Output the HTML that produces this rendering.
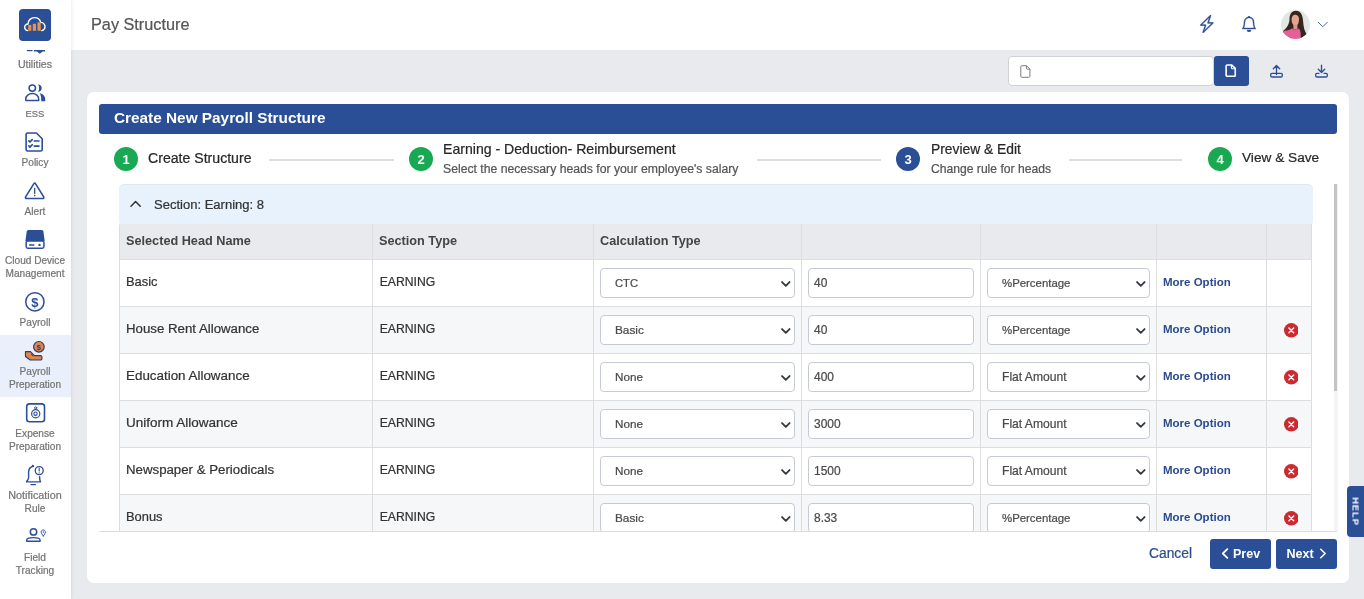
<!DOCTYPE html>
<html lang="en">
<head>
<meta charset="utf-8">
<title>Pay Structure</title>
<style>
*{box-sizing:border-box;margin:0;padding:0}
html,body{width:1364px;height:599px;overflow:hidden}
body{background:#e9eaee;font-family:"Liberation Sans",sans-serif;color:#333;position:relative;-webkit-text-stroke:.22px}
.abs{position:absolute}
#hdr,th,.mo,.btn,.stepc,#help,#side text{-webkit-text-stroke:0}
#wrap{position:absolute;left:0;top:0;width:1364px;height:599px;overflow:hidden;will-change:transform;opacity:.999}
svg{display:block}
/* sidebar */
#side{position:absolute;left:0;top:0;width:71px;height:599px;background:#fff;box-shadow:1px 0 3px rgba(0,0,0,.08);z-index:5}
#logo{position:absolute;left:19px;top:9px;width:32px;height:32px;border-radius:4px;background:#2b4f96}
.nl{position:absolute;left:0;width:70px;text-align:center;font-size:10.1px;line-height:13px;color:#747474;white-space:nowrap}
.ni{position:absolute}
#act{position:absolute;left:0;top:335px;width:71px;height:62px;background:#e9effb}
/* topbar */
#top{position:absolute;left:71px;top:0;width:1293px;height:50px;background:#fff}
#title{position:absolute;left:91px;top:13px;font-size:16.25px;line-height:22px;color:#555;z-index:2}
/* toolbar */
#fin{position:absolute;left:1008px;top:56px;width:206px;height:30px;background:#fff;border:1px solid #cfd1d5;border-radius:4px}
#fbtn{position:absolute;left:1214px;top:56px;width:35px;height:30px;background:#2b4f96;border-radius:3px}
/* card */
#card{position:absolute;left:87px;top:92px;width:1262px;height:491px;background:#fff;border-radius:7px}
#hdr{position:absolute;left:99px;top:104px;width:1238px;height:30px;background:#2b4f96;border-radius:3px;color:#fff;font-weight:bold;font-size:15.35px;line-height:28px;padding-left:15px}
.stepc{position:absolute;top:147px;width:24px;height:24px;border-radius:50%;color:#fff;font-size:13px;font-weight:bold;text-align:center;line-height:26.5px}
.g{background:#1aa953}.b{background:#2b4f96}
.st{position:absolute;line-height:18px;color:#282828;white-space:nowrap}
.ss{position:absolute;line-height:14px;color:#555;white-space:nowrap}
.ln{position:absolute;height:2px;background:#dedede;top:159px}
#sec{position:absolute;left:119px;top:184px;width:1194px;height:40px;background:#e7f2fd;border-top:1px solid #e3e8ee;border-radius:5px 5px 2px 2px;font-size:13.03px;line-height:39px;color:#333}
#tblwrap{position:absolute;left:119px;top:224px;width:1193px;height:307px;overflow:hidden}
table{border-collapse:collapse;table-layout:fixed;width:1192px}
th,td{border:1px solid #dcdddf;text-align:left;vertical-align:top;position:relative;white-space:nowrap}
th{background:#e9eaed;height:35px;font-size:12.7px;font-weight:bold;color:#444;padding:9px 0 0 6px;border-top-color:#e9eaed}
td{height:47px;padding:14px 0 0 6px;color:#333;line-height:16px}
tr.e td{background:#f6f7f9}
.sel{position:absolute;left:6px;top:8px;height:30px;border:1px solid #c6cad5;border-radius:4px;background:#fff;line-height:28px;padding-left:14px;color:#4a4a4a}
.s1{width:195px}.s2{width:163px}
.cv{position:absolute;right:3.5px;top:11.5px}
.inp{position:absolute;left:6px;top:8px;width:166px;height:30px;border:1px solid #c6cad5;border-radius:4px;background:#fff;font-size:11.95px;line-height:28px;padding-left:5px;color:#4a4a4a}
.mo{color:#2b4b8e;font-weight:bold;font-size:11.5px;position:relative;top:-1.5px}
.del{position:absolute;left:16.7px;top:16.2px;width:14.6px;height:14.6px}
#botline{position:absolute;left:99px;top:531px;width:1238px;height:1px;background:#dcdcdc}
#track{position:absolute;left:1334px;top:184px;width:4px;height:347px;background:#f4f4f4}
#thumb{position:absolute;left:1334px;top:184px;width:3px;height:207px;background:#c4c4c4}
.btn{position:absolute;top:539px;height:30px;width:61px;background:#2b4f96;border-radius:3px;color:#fff;font-weight:bold;line-height:31px;white-space:nowrap}
#help{position:absolute;left:1347px;top:486px;width:18px;height:51px;background:#2b4f96;border-radius:4px 0 0 4px}
#help span{position:absolute;left:-17.5px;top:18px;width:51px;height:14px;line-height:14px;text-align:center;transform:rotate(90deg);color:#fff;font-weight:bold;font-size:9.4px;letter-spacing:.9px;padding-left:1px}
</style>
</head>
<body>
<div id="wrap">
<div id="top"></div>
<div id="title">Pay Structure</div>
<svg class="abs" style="left:1197px;top:15px" width="19.6" height="18" viewBox="0 0 16 16" preserveAspectRatio="none" fill="#2b4f96" stroke="#2b4f96" stroke-width=".25"><path d="M11.251.068a.5.5 0 0 1 .227.58L9.677 6.5H13a.5.5 0 0 1 .364.843l-8 8.500a.5.5 0 0 1-.842-.49L6.323 9.500H3a.5.5 0 0 1-.364-.843l8-8.500a.5.5 0 0 1 .615-.09zM4.157 8.500H7a.5.5 0 0 1 .478.647L6.110 13.590l5.732-6.090H9a.5.5 0 0 1-.478-.647L9.890 2.410 4.157 8.500z"/></svg>
<svg class="abs" style="left:1241px;top:16px" width="16" height="16" viewBox="0 0 16 16" fill="#2b4f96" stroke="#2b4f96" stroke-width=".4"><path d="M8 16a2 2 0 0 0 2-2H6a2 2 0 0 0 2 2zM8 1.918l-.797.161A4.002 4.002 0 0 0 4 6c0 .628-.134 2.197-.459 3.742-.16.767-.376 1.566-.663 2.258h10.244c-.287-.692-.502-1.490-.663-2.258C12.134 8.197 12 6.628 12 6a4.002 4.002 0 0 0-3.203-3.920L8 1.917zM14.220 12c.223.447.481.801.780 1H1c.299-.199.557-.553.780-1C2.680 10.200 3 6.880 3 6c0-2.420 1.720-4.440 4.005-4.901a1 1 0 1 1 1.990 0A5.002 5.002 0 0 1 13 6c0 .880.320 4.200 1.220 6z"/></svg>
<svg class="abs" style="left:1281px;top:10px" width="29" height="29" viewBox="0 0 29 29">
<defs><clipPath id="av"><circle cx="14.5" cy="14.5" r="14.5"/></clipPath><filter id="bl" x="-10%" y="-10%" width="120%" height="120%"><feGaussianBlur stdDeviation=".55"/></filter></defs>
<g clip-path="url(#av)"><g filter="url(#bl)">
<rect x="-3" y="-3" width="35" height="35" fill="#e4e6e6"/>
<path d="M15 0.800 C10.500 0.600 8.600 4.500 8.500 9 C8.400 13.500 6.600 17.400 1.500 21.600 L1 26 L10 22 L18 22 L19.500 28 L26 24.500 C23.400 21.500 22.600 17 22.200 12 C21.800 6 20.400 1 15 0.800 Z" fill="#38251f"/>
<path d="M10.600 9.500 C10.600 6.500 12 4.800 14.200 4.800 C16.800 4.800 18.200 7 18 10.200 C17.800 13.400 16.400 15.800 14.400 15.800 C12.200 15.800 10.600 13 10.600 9.500 Z" fill="#e2a48e"/>
<path d="M12.400 14.500 H16.400 V19.500 H12.400 Z" fill="#d99a86"/>
<path d="M2 21.600 C5 19.800 8 19.600 11.400 18.400 C13.200 20 15.800 20 17.600 18.600 C18.800 19.600 19.600 21 19.800 23 L19.600 30 H4 Z" fill="#e55f98"/>
<path d="M10.700 12.500 C9.800 15.600 8.200 18.400 4.500 21 L9.200 19.400 C10.600 17.400 11.200 15 10.700 12.500 Z" fill="#38251f"/>
<path d="M17.900 10.500 C18 15 18.600 19 19.800 22.400 L20 28 L25 25 C22.600 21 21.600 15 20.800 9 Z" fill="#38251f"/>
</g></g></svg>
<svg class="abs" style="left:1317px;top:21px" width="12" height="8" viewBox="0 0 12 8"><path d="M1.2 1.2 L5.8 5.8 L10.4 1.2" fill="none" stroke="#4a66ab" stroke-width="1" stroke-linecap="round" stroke-linejoin="round"/></svg>

<div id="fin"></div>
<div id="fbtn"></div>
<svg class="abs" style="left:1020px;top:65px" width="11" height="13" viewBox="0 0 11 13"><path d="M1.9 .7 H6.6 L9.9 4 V11.2 C9.9 11.8 9.4 12.3 8.800 12.3 H1.9 C1.3 12.3 .8 11.8 .8 11.2 V1.8 C.8 1.2 1.3 .7 1.9 .7 Z M6.4 .9 V3.200 C6.4 3.800 6.800 4.200 7.400 4.200 H9.7" fill="none" stroke="#6e6e6e" stroke-width=".9"/></svg>
<svg class="abs" style="left:1225.3px;top:63.6px" width="11.4" height="13.3" viewBox="0 0 12 14"><path d="M2.4 1 H7.200 L10.800 4.600 V11.800 C10.800 12.500 10.300 13 9.600 13 H2.400 C1.700 13 1.200 12.500 1.200 11.800 V2.200 C1.200 1.500 1.700 1 2.400 1 Z" fill="none" stroke="#fff" stroke-width="1.7" stroke-linejoin="round"/><path d="M6.8 1 V3.800 C6.800 4.500 7.300 5 8 5 H10.800" fill="none" stroke="#fff" stroke-width="1.3"/></svg>
<svg class="abs" style="left:1269px;top:64px" width="15" height="15" viewBox="0 0 15 15" fill="none" stroke="#2b4f96" stroke-width="1.35" stroke-linecap="round" stroke-linejoin="round"><rect x="1.700" y="9.300" width="11.600" height="3.700" rx="1.300"/><path d="M7.500 10.400 V1.600 M4.300 4.700 L7.500 1.500 L10.700 4.700"/></svg>
<svg class="abs" style="left:1314px;top:64px" width="15" height="15" viewBox="0 0 15 15" fill="none" stroke="#2b4f96" stroke-width="1.35" stroke-linecap="round" stroke-linejoin="round"><path d="M5 9.300 H3 C2.300 9.300 1.700 9.900 1.700 10.600 V11.700 C1.700 12.400 2.300 13 3 13 H12 C12.700 13 13.300 12.400 13.300 11.700 V10.600 C13.300 9.900 12.700 9.300 12 9.300 H10"/><path d="M7.500 1.200 V8.300 M4.300 5.300 L7.500 8.500 L10.700 5.300"/></svg>

<div id="side">
  <div id="logo"></div>
  <div id="act"></div>
<svg class="abs" style="left:0;top:0" width="71" height="599" viewBox="0 0 71 599" fill="none" stroke="#2b4f96" stroke-width="1.5" stroke-linecap="round" stroke-linejoin="round">
<!-- logo cloud -->
<path d="M27.6 30.6 C24.6 30.2 23.6 26.6 25.8 24.8 C26.4 24.2 27.2 24 28 24 C28.2 20.2 31 17.6 34.4 17.6 C37.6 17.6 40 19.6 40.8 22.4 C43.4 22.6 45.2 24.6 45 27 C44.9 28.8 43.6 30.2 41.8 30.6" stroke="#fff" stroke-width="1.4"/>
<g stroke="none" fill="#e9924c"><rect x="28.2" y="25" width="3.1" height="5.8"/><rect x="32.8" y="23.8" width="3.2" height="7"/><rect x="37.5" y="22.3" width="3.2" height="8.5"/></g>
<!-- utilities (clipped bottom) -->
<g stroke="none" fill="#2b4f96"><rect x="26.9" y="50" width="5.6" height="1.2"/><path d="M33.8 50 H45 V51.4 H42.6 L39.8 53.8 L37 51.4 H33.8 Z"/></g>
<!-- ESS -->
<circle cx="32.3" cy="88.1" r="3.2"/>
<path d="M25.8 100.5 V99 C25.8 96 28.7 93.6 32.3 93.6 C35.9 93.6 38.7 96 38.7 99 V100.5 Z"/>
<g stroke="none" fill="#2b4f96"><path d="M38 84.2 C40.4 84.4 41.7 86.1 41.7 88.1 C41.7 90.1 40.4 91.8 38 92 C39.5 89.700 39.5 86.500 38 84.2 Z"/><path d="M39.6 93.2 C43 93.8 45.2 96.2 45.2 99 V101.3 H41.2 V99 C41.2 96.8 40.8 94.8 39.6 93.2 Z"/></g>
<!-- Policy -->
<path d="M27.6 133 H36.4 L42.2 138.8 V149.4 C42.2 150.3 41.5 151 40.6 151 H27.6 C26.7 151 26.1 150.3 26.1 149.4 V134.6 C26.1 133.7 26.7 133 27.6 133 Z" stroke-width="1.6"/>
<path d="M28.8 140.8 L30 142 L32.2 139.6 M34.2 141 H39 M28.8 145.900 L30 147.100 L32.2 144.700 M34.2 146.100 H39" stroke-width="1.65"/>
<!-- Alert -->
<path d="M33.9 183.6 C34.3 182.9 35.100 182.9 35.5 183.6 L43.7 196.900 C44.100 197.700 43.6 198.5 42.8 198.5 H26.5 C25.7 198.5 25.200 197.700 25.6 196.900 Z" stroke-width="1.6"/>
<path d="M34.7 188.4 V193.4" stroke-width="1.3"/><circle cx="34.7" cy="195.6" r=".8" fill="#2b4f96" stroke="none"/>
<!-- Cloud device -->
<path d="M28.6 230.1 H41.5 C42.5 230.1 43.2 230.7 43.4 231.6 L44.7 241 H25.4 L26.7 231.6 C26.9 230.7 27.6 230.1 28.6 230.1 Z" fill="#2b4f96" stroke="none"/>
<rect x="26.15" y="241" width="17.8" height="7.2" rx="1.6" stroke-width="1.5"/>
<path d="M29.6 245 H33.8" stroke-width="1.5"/><circle cx="39.5" cy="244.9" r="1.2" fill="#2b4f96" stroke="none"/>
<!-- Payroll -->
<circle cx="34.9" cy="301.8" r="9.15" stroke-width="1.5"/>
<text x="34.9" y="306.6" text-anchor="middle" font-family="Liberation Sans, sans-serif" font-size="13" font-weight="bold" fill="#2b4f96" stroke="none">$</text>
<!-- Payroll prep -->
<g stroke="#2c3e73" stroke-width="1.2" fill="#e08545">
<circle cx="38.9" cy="346.8" r="5.3"/>
<path d="M25.5 351.6 H30.4 L34.4 355.6 H40.8 C42.4 355.6 42.4 360 40.8 360 H30.2 L25.5 356.4 Z"/>
</g>
<path d="M31.4 354.6 L32.8 355.6" stroke="#2c3e73" stroke-width="1"/>
<text x="38.9" y="349.6" text-anchor="middle" font-family="Liberation Sans, sans-serif" font-size="7.6" font-weight="bold" fill="#2c3e73" stroke="none">$</text>
<!-- Expense -->
<rect x="26.7" y="403.9" width="17.8" height="17.8" rx="2.8" stroke-width="1.6"/>
<circle cx="35.7" cy="413.7" r="4.1" stroke-width="1.2"/><circle cx="35.5" cy="413.7" r="1.7" stroke-width="1.1"/><circle cx="35.7" cy="407.9" r="1.1" stroke-width="1"/>
<!-- Notification -->
<path d="M33.6 466.2 C30.4 466.6 28.6 469.2 28.6 472.4 V477.6 C28.6 479.6 27.6 480.6 26.6 481.4 V481.9 H40.4 V481.4 C39.8 480.8 39.6 479.4 39.6 476.6" stroke-width="1.4"/>
<path d="M31 484.7 H35.4 M32.4 465.4 L33.4 465.8" stroke-width="1.3"/>
<circle cx="39.2" cy="470.6" r="4" stroke-width="1.3"/><path d="M39.2 468.4 V471" stroke-width="1.1"/><circle cx="39.2" cy="472.8" r=".6" fill="#2b4f96" stroke="none"/>
<!-- Field -->
<circle cx="33.5" cy="531.9" r="3.2" stroke-width="1.5"/>
<path d="M26.7 541.2 V540.2 C26.7 538.6 29.4 537.6 33.4 537.6 C37.4 537.6 40.1 538.6 40.1 540.2 V541.2 Z" stroke-width="1.4"/>
<path d="M43.3 536 C42 534.4 41.2 533.2 41.2 532 C41.2 530.8 42.1 529.9 43.3 529.9 C44.5 529.9 45.4 530.8 45.4 532 C45.4 533.2 44.6 534.4 43.3 536 Z" stroke-width=".9"/><circle cx="43.3" cy="532" r=".7" fill="#2b4f96" stroke="none"/>
</svg>

  <div class="nl" style="top:58px;font-size:10.6px">Utilities</div>
  <div class="nl" style="top:107px;font-size:9.4px">ESS</div>
  <div class="nl" style="top:156px">Policy</div>
  <div class="nl" style="top:205px">Alert</div>
  <div class="nl" style="top:254px">Cloud Device<br>Management</div>
  <div class="nl" style="top:316px">Payroll</div>
  <div class="nl" style="top:365px">Payroll<br>Preperation</div>
  <div class="nl" style="top:427px">Expense<br>Preparation</div>
  <div class="nl" style="top:489px"><span style="font-size:10.8px">Notification</span><br>Rule</div>
  <div class="nl" style="top:551px">Field<br>Tracking</div>
</div>
<div id="card"></div>
<div id="hdr">Create New Payroll Structure</div>

<div class="stepc g" style="left:114px">1</div>
<div class="st" style="left:148px;top:149px;font-size:14.12px">Create Structure</div>
<div class="ln" style="left:269px;width:125px"></div>
<div class="stepc g" style="left:409px">2</div>
<div class="st" style="left:443px;top:140px;font-size:14.1px">Earning - Deduction- Reimbursement</div>
<div class="ss" style="left:443px;top:162px;font-size:12.21px">Select the necessary heads for your employee's salary</div>
<div class="ln" style="left:757px;width:124px"></div>
<div class="stepc b" style="left:896px">3</div>
<div class="st" style="left:931px;top:140px;font-size:13.84px">Preview &amp; Edit</div>
<div class="ss" style="left:931px;top:162px;font-size:12.14px">Change rule for heads</div>
<div class="ln" style="left:1069px;width:113px"></div>
<div class="stepc g" style="left:1208px">4</div>
<div class="st" style="left:1242px;top:149px;font-size:13.66px">View &amp; Save</div>

<div id="sec"><svg class="abs" style="left:11px;top:15.200px" width="11.200" height="7.400" viewBox="0 0 12 8"><path d="M1 6.8 L6 1.6 L11 6.8" fill="none" stroke="#333" stroke-width="1.6" stroke-linecap="round" stroke-linejoin="round"/></svg><span style="position:absolute;left:35px">Section: Earning: 8</span></div>
<div id="tblwrap">
<table>
<colgroup><col style="width:253px"><col style="width:221px"><col style="width:208px"><col style="width:179px"><col style="width:176px"><col style="width:110px"><col style="width:45px"></colgroup>
<tr><th>Selected Head Name</th><th>Section Type</th><th>Calculation Type</th><th></th><th></th><th></th><th></th></tr>
<tr><td style="font-size:12.9px">Basic</td><td style="font-size:12.2px;padding-left:6.7px">EARNING</td><td><div class="sel s1" style="font-size:11.2px">CTC<svg class="cv" width="9.6" height="6.1" viewBox="0 0 11 7"><path d="M1.2 1.2 L5.5 5.5 L9.8 1.2" fill="none" stroke="#343a40" stroke-width="2.15" stroke-linecap="round" stroke-linejoin="round"/></svg></div></td><td><div class="inp">40</div></td><td><div class="sel s2" style="font-size:11.4px">%Percentage<svg class="cv" width="9.6" height="6.1" viewBox="0 0 11 7"><path d="M1.2 1.2 L5.5 5.5 L9.8 1.2" fill="none" stroke="#343a40" stroke-width="2.15" stroke-linecap="round" stroke-linejoin="round"/></svg></div></td><td><span class="mo">More Option</span></td><td></td></tr>
<tr class="e"><td style="font-size:13.25px">House Rent Allowance</td><td style="font-size:12.2px;padding-left:6.7px">EARNING</td><td><div class="sel s1" style="font-size:11.8px">Basic<svg class="cv" width="9.6" height="6.1" viewBox="0 0 11 7"><path d="M1.2 1.2 L5.5 5.5 L9.8 1.2" fill="none" stroke="#343a40" stroke-width="2.15" stroke-linecap="round" stroke-linejoin="round"/></svg></div></td><td><div class="inp">40</div></td><td><div class="sel s2" style="font-size:11.4px">%Percentage<svg class="cv" width="9.6" height="6.1" viewBox="0 0 11 7"><path d="M1.2 1.2 L5.5 5.5 L9.8 1.2" fill="none" stroke="#343a40" stroke-width="2.15" stroke-linecap="round" stroke-linejoin="round"/></svg></div></td><td><span class="mo">More Option</span></td><td><svg class="del" viewBox="0 0 16 16"><circle cx="8" cy="8" r="8" fill="#cb2a31"/><path d="M5.4 5.4 L10.6 10.6 M10.6 5.4 L5.4 10.6" stroke="#fff" stroke-width="1.5" stroke-linecap="round"/></svg></td></tr>
<tr><td style="font-size:13.4px">Education Allowance</td><td style="font-size:12.2px;padding-left:6.7px">EARNING</td><td><div class="sel s1" style="font-size:11.7px">None<svg class="cv" width="9.6" height="6.1" viewBox="0 0 11 7"><path d="M1.2 1.2 L5.5 5.5 L9.8 1.2" fill="none" stroke="#343a40" stroke-width="2.15" stroke-linecap="round" stroke-linejoin="round"/></svg></div></td><td><div class="inp">400</div></td><td><div class="sel s2" style="font-size:12.1px">Flat Amount<svg class="cv" width="9.6" height="6.1" viewBox="0 0 11 7"><path d="M1.2 1.2 L5.5 5.5 L9.8 1.2" fill="none" stroke="#343a40" stroke-width="2.15" stroke-linecap="round" stroke-linejoin="round"/></svg></div></td><td><span class="mo">More Option</span></td><td><svg class="del" viewBox="0 0 16 16"><circle cx="8" cy="8" r="8" fill="#cb2a31"/><path d="M5.4 5.4 L10.6 10.6 M10.6 5.4 L5.4 10.6" stroke="#fff" stroke-width="1.5" stroke-linecap="round"/></svg></td></tr>
<tr class="e"><td style="font-size:13.5px">Uniform Allowance</td><td style="font-size:12.2px;padding-left:6.7px">EARNING</td><td><div class="sel s1" style="font-size:11.7px">None<svg class="cv" width="9.6" height="6.1" viewBox="0 0 11 7"><path d="M1.2 1.2 L5.5 5.5 L9.8 1.2" fill="none" stroke="#343a40" stroke-width="2.15" stroke-linecap="round" stroke-linejoin="round"/></svg></div></td><td><div class="inp">3000</div></td><td><div class="sel s2" style="font-size:12.1px">Flat Amount<svg class="cv" width="9.6" height="6.1" viewBox="0 0 11 7"><path d="M1.2 1.2 L5.5 5.5 L9.8 1.2" fill="none" stroke="#343a40" stroke-width="2.15" stroke-linecap="round" stroke-linejoin="round"/></svg></div></td><td><span class="mo">More Option</span></td><td><svg class="del" viewBox="0 0 16 16"><circle cx="8" cy="8" r="8" fill="#cb2a31"/><path d="M5.4 5.4 L10.6 10.6 M10.6 5.4 L5.4 10.6" stroke="#fff" stroke-width="1.5" stroke-linecap="round"/></svg></td></tr>
<tr><td style="font-size:13.25px">Newspaper &amp; Periodicals</td><td style="font-size:12.2px;padding-left:6.7px">EARNING</td><td><div class="sel s1" style="font-size:11.7px">None<svg class="cv" width="9.6" height="6.1" viewBox="0 0 11 7"><path d="M1.2 1.2 L5.5 5.5 L9.8 1.2" fill="none" stroke="#343a40" stroke-width="2.15" stroke-linecap="round" stroke-linejoin="round"/></svg></div></td><td><div class="inp">1500</div></td><td><div class="sel s2" style="font-size:12.1px">Flat Amount<svg class="cv" width="9.6" height="6.1" viewBox="0 0 11 7"><path d="M1.2 1.2 L5.5 5.5 L9.8 1.2" fill="none" stroke="#343a40" stroke-width="2.15" stroke-linecap="round" stroke-linejoin="round"/></svg></div></td><td><span class="mo">More Option</span></td><td><svg class="del" viewBox="0 0 16 16"><circle cx="8" cy="8" r="8" fill="#cb2a31"/><path d="M5.4 5.4 L10.6 10.6 M10.6 5.4 L5.4 10.6" stroke="#fff" stroke-width="1.5" stroke-linecap="round"/></svg></td></tr>
<tr class="e"><td style="font-size:12.9px">Bonus</td><td style="font-size:12.2px;padding-left:6.7px">EARNING</td><td><div class="sel s1" style="font-size:11.8px">Basic<svg class="cv" width="9.6" height="6.1" viewBox="0 0 11 7"><path d="M1.2 1.2 L5.5 5.5 L9.8 1.2" fill="none" stroke="#343a40" stroke-width="2.15" stroke-linecap="round" stroke-linejoin="round"/></svg></div></td><td><div class="inp">8.33</div></td><td><div class="sel s2" style="font-size:11.4px">%Percentage<svg class="cv" width="9.6" height="6.1" viewBox="0 0 11 7"><path d="M1.2 1.2 L5.5 5.5 L9.8 1.2" fill="none" stroke="#343a40" stroke-width="2.15" stroke-linecap="round" stroke-linejoin="round"/></svg></div></td><td><span class="mo">More Option</span></td><td><svg class="del" viewBox="0 0 16 16"><circle cx="8" cy="8" r="8" fill="#cb2a31"/><path d="M5.4 5.4 L10.6 10.6 M10.6 5.4 L5.4 10.6" stroke="#fff" stroke-width="1.5" stroke-linecap="round"/></svg></td></tr>
</table>
</div>
<div id="track"></div><div id="thumb"></div>
<div id="botline"></div>
<div class="abs" style="left:1149px;top:544px;font-size:13.8px;line-height:20px;color:#2d4d8e">Cancel</div>
<div class="btn" style="left:1210px;font-size:12.5px"><svg class="abs" style="left:11px;top:9px" width="8" height="11" viewBox="0 0 8 11"><path d="M6.3 1.2 L1.8 5.5 L6.3 9.8" fill="none" stroke="#fff" stroke-width="1.8" stroke-linecap="round" stroke-linejoin="round"/></svg><span class="abs" style="left:23px">Prev</span></div>
<div class="btn" style="left:1276px;font-size:12.55px"><span class="abs" style="left:10.5px">Next</span><svg class="abs" style="left:43px;top:9px" width="8" height="11" viewBox="0 0 8 11"><path d="M1.7 1.2 L6.2 5.5 L1.7 9.8" fill="none" stroke="#fff" stroke-width="1.5" stroke-linecap="round" stroke-linejoin="round"/></svg></div>
<div id="help"><span>HELP</span></div>
</div>
</body>
</html>
